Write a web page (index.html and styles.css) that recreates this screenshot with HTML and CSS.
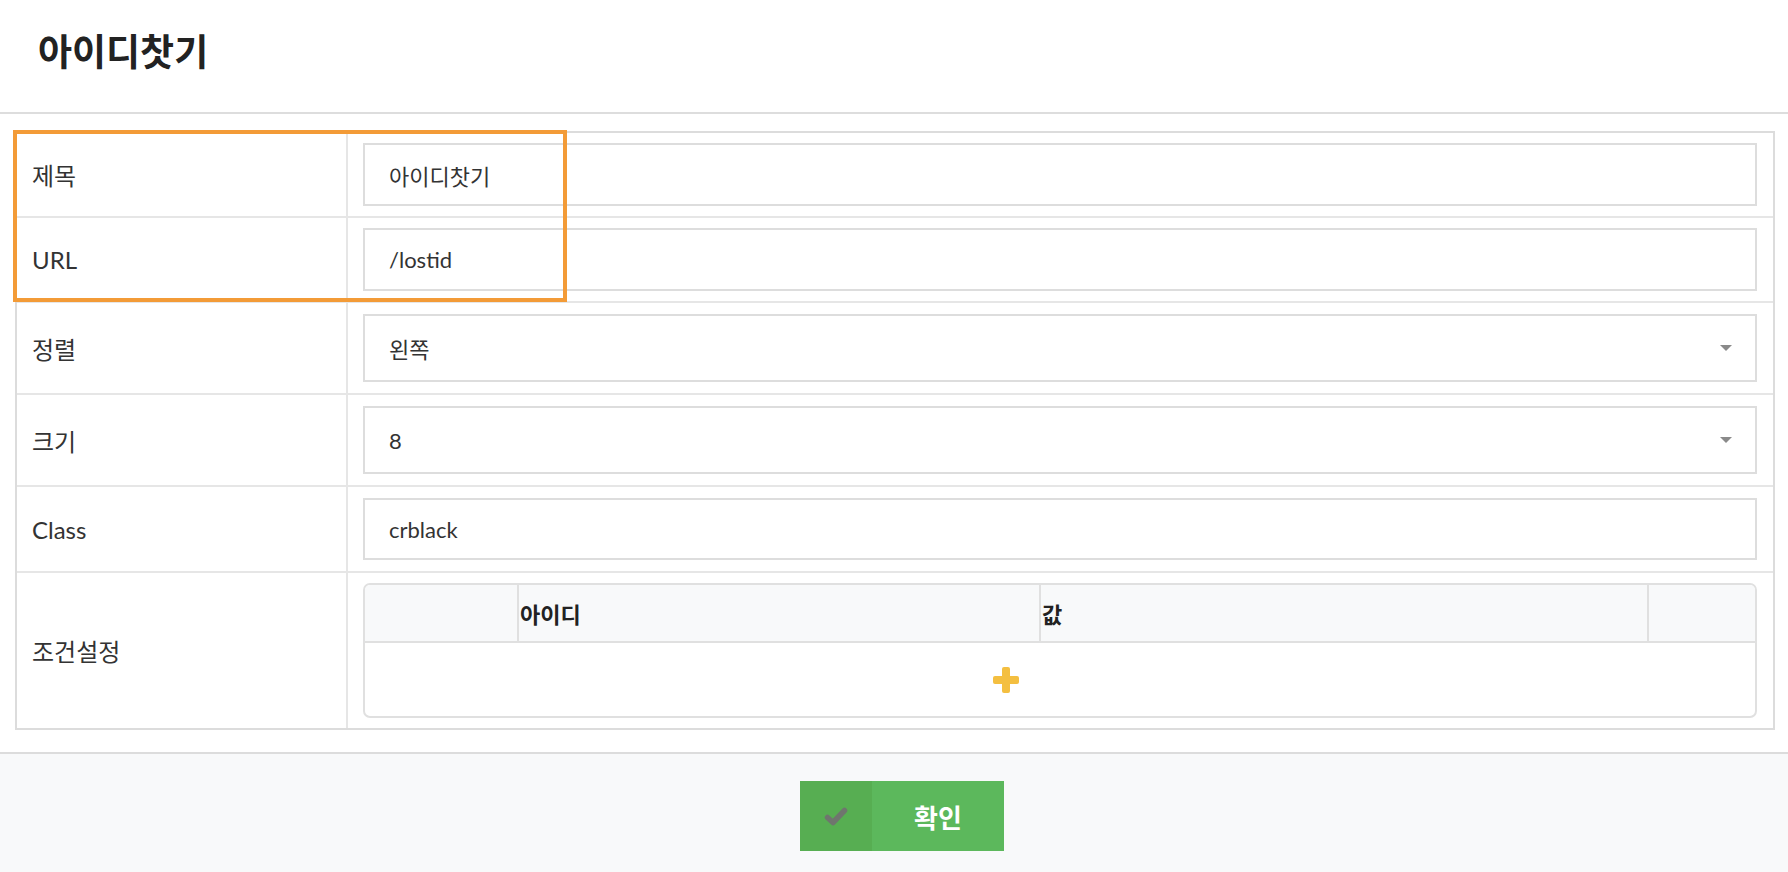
FILE: index.html
```html
<!DOCTYPE html>
<html lang="ko">
<head>
<meta charset="utf-8">
<title>아이디찻기</title>
<link rel="stylesheet" href="styles.css">
</head>
<body>
<header class="page-header">
  <h1 class="page-title">아이디찻기</h1>
</header>

<main class="page-body">
  <div class="form-grid">
    <div class="form-row row-text">
      <div class="label-cell">제목</div>
      <div class="value-cell"><input class="field" type="text" value="아이디찻기"></div>
    </div>
    <div class="form-row row-text">
      <div class="label-cell">URL</div>
      <div class="value-cell"><input class="field" type="text" value="/lostid"></div>
    </div>
    <div class="form-row row-select">
      <div class="label-cell">정렬</div>
      <div class="value-cell">
        <div class="field select"><span>왼쪽</span>
          <svg class="caret" width="12" height="6" viewBox="0 0 12 6"><path d="M0 0H12L6 6Z" fill="#8a8a8a"/></svg>
        </div>
      </div>
    </div>
    <div class="form-row row-select">
      <div class="label-cell">크기</div>
      <div class="value-cell">
        <div class="field select"><span>8</span>
          <svg class="caret" width="12" height="6" viewBox="0 0 12 6"><path d="M0 0H12L6 6Z" fill="#8a8a8a"/></svg>
        </div>
      </div>
    </div>
    <div class="form-row row-class">
      <div class="label-cell">Class</div>
      <div class="value-cell"><input class="field field-class" type="text" value="crblack"></div>
    </div>
    <div class="form-row row-cond">
      <div class="label-cell">조건설정</div>
      <div class="value-cell">
        <div class="cond-table">
          <div class="cond-head">
            <div class="ch ch1"></div>
            <div class="ch ch2">아이디</div>
            <div class="ch ch3">값</div>
            <div class="ch ch4"></div>
          </div>
          <div class="cond-body">
            <div class="add-cell">
              <svg width="26" height="26" viewBox="0 0 26 26" aria-label="추가">
                <rect x="9" y="0" width="8" height="26" rx="2" fill="#f4bf40"/>
                <rect x="0" y="9" width="26" height="8" rx="2" fill="#f4bf40"/>
              </svg>
            </div>
            <div class="empty-cell"></div>
          </div>
        </div>
      </div>
    </div>
  </div>
  <div class="highlight-box"></div>
</main>

<footer class="page-footer">
  <button class="btn-confirm" type="button">
    <span class="btn-icon">
      <svg width="24" height="19" viewBox="0 0 24 19"><path d="M3.5 10.5L9 15.5L20.5 3.5" fill="none" stroke="#6f756e" stroke-width="5.5" stroke-linecap="round" stroke-linejoin="round"/></svg>
    </span>
    <span class="btn-text">확인</span>
  </button>
</footer>
</body>
</html>
```

FILE: styles.css
```css
* { box-sizing: border-box; }

html, body {
  margin: 0;
  padding: 0;
  background: #ffffff;
}

body {
  font-family: Lato, "Noto Sans CJK KR", sans-serif;
  color: #333333;
  width: 1788px;
  height: 872px;
  overflow: hidden;
}

.page-header {
  height: 114px;
  border-bottom: 2px solid #dddddd;
  display: flex;
  align-items: center;
  padding: 0 0 12px 38px;
}

.page-title {
  margin: 0;
  font-family: "Noto Sans CJK KR", sans-serif;
  font-weight: 700;
  font-size: 37px;
  line-height: 44px;
  color: #222222;
  letter-spacing: 0;
}

.page-body {
  position: relative;
  padding: 17px 13px 22px 15px;
}

.form-grid {
  border: 2px solid #dcdcdc;
  height: 599px;
  display: flex;
  flex-direction: column;
}

.form-row {
  display: flex;
  border-top: 2px solid #e6e6e6;
}

.form-row:first-child { border-top: none; }

.row-cond { flex: 1; }

.label-cell {
  width: 331px;
  flex: none;
  border-right: 2px solid #e6e6e6;
  display: flex;
  align-items: center;
  padding-left: 15px;
  font-size: 24px;
  color: #333333;
}

.value-cell {
  flex: 1;
  padding: 10px 16px 10px 15px;
}

.row-select .value-cell,
.row-class .value-cell { padding-top: 11px; padding-bottom: 11px; }

.field {
  display: block;
  width: 100%;
  height: 63px;
  border: 2px solid #dddddd;
  border-radius: 0;
  background: #ffffff;
  padding: 0 24px;
  font-family: Lato, "Noto Sans CJK KR", sans-serif;
  font-size: 22px;
  color: #333333;
  outline: none;
  margin: 0;
}

.field-class { height: 62px; }

.select {
  height: 68px;
  display: flex;
  align-items: center;
  justify-content: space-between;
  padding-right: 23px;
}

.caret { display: block; }

.cond-table {
  border: 2px solid #e0e0e0;
  border-radius: 7px;
  overflow: hidden;
  height: 135px;
  display: flex;
  flex-direction: column;
}

.cond-head {
  display: grid;
  grid-template-columns: 152px 522px 608px 1fr;
  height: 58px;
  background: #f8f9fa;
  border-bottom: 2px solid #e0e0e0;
}

.ch {
  display: flex;
  align-items: center;
  padding-left: 1px;
  font-family: "Noto Sans CJK KR", sans-serif;
  font-weight: 700;
  font-size: 22px;
  color: #222222;
}

.ch2, .ch3, .ch4 { border-left: 2px solid #e0e0e0; }

.cond-body {
  flex: 1;
  display: grid;
  grid-template-columns: 1282px 1fr;
}

.add-cell {
  display: flex;
  align-items: center;
  justify-content: center;
}

.add-cell svg { display: block; }

.highlight-box {
  position: absolute;
  left: 13px;
  top: 16px;
  width: 554px;
  height: 172px;
  border: 4px solid #f39b37;
  pointer-events: none;
}

.page-footer {
  height: 120px;
  border-top: 2px solid #dcdcdc;
  background: #f8f9fa;
  display: flex;
  justify-content: center;
  align-items: flex-start;
  padding: 27px 0 0 16px;
}

.btn-confirm {
  display: flex;
  width: 204px;
  height: 70px;
  border: none;
  padding: 0;
  margin: 0;
  background: #5cb85c;
  cursor: pointer;
  font-family: "Noto Sans CJK KR", sans-serif;
}

.btn-icon {
  width: 72px;
  height: 100%;
  background: #57ae52;
  display: flex;
  align-items: center;
  justify-content: center;
}

.btn-icon svg { display: block; }

.btn-text {
  flex: 1;
  display: flex;
  align-items: center;
  justify-content: center;
  color: #ffffff;
  font-weight: 700;
  font-size: 26px;
}
```
